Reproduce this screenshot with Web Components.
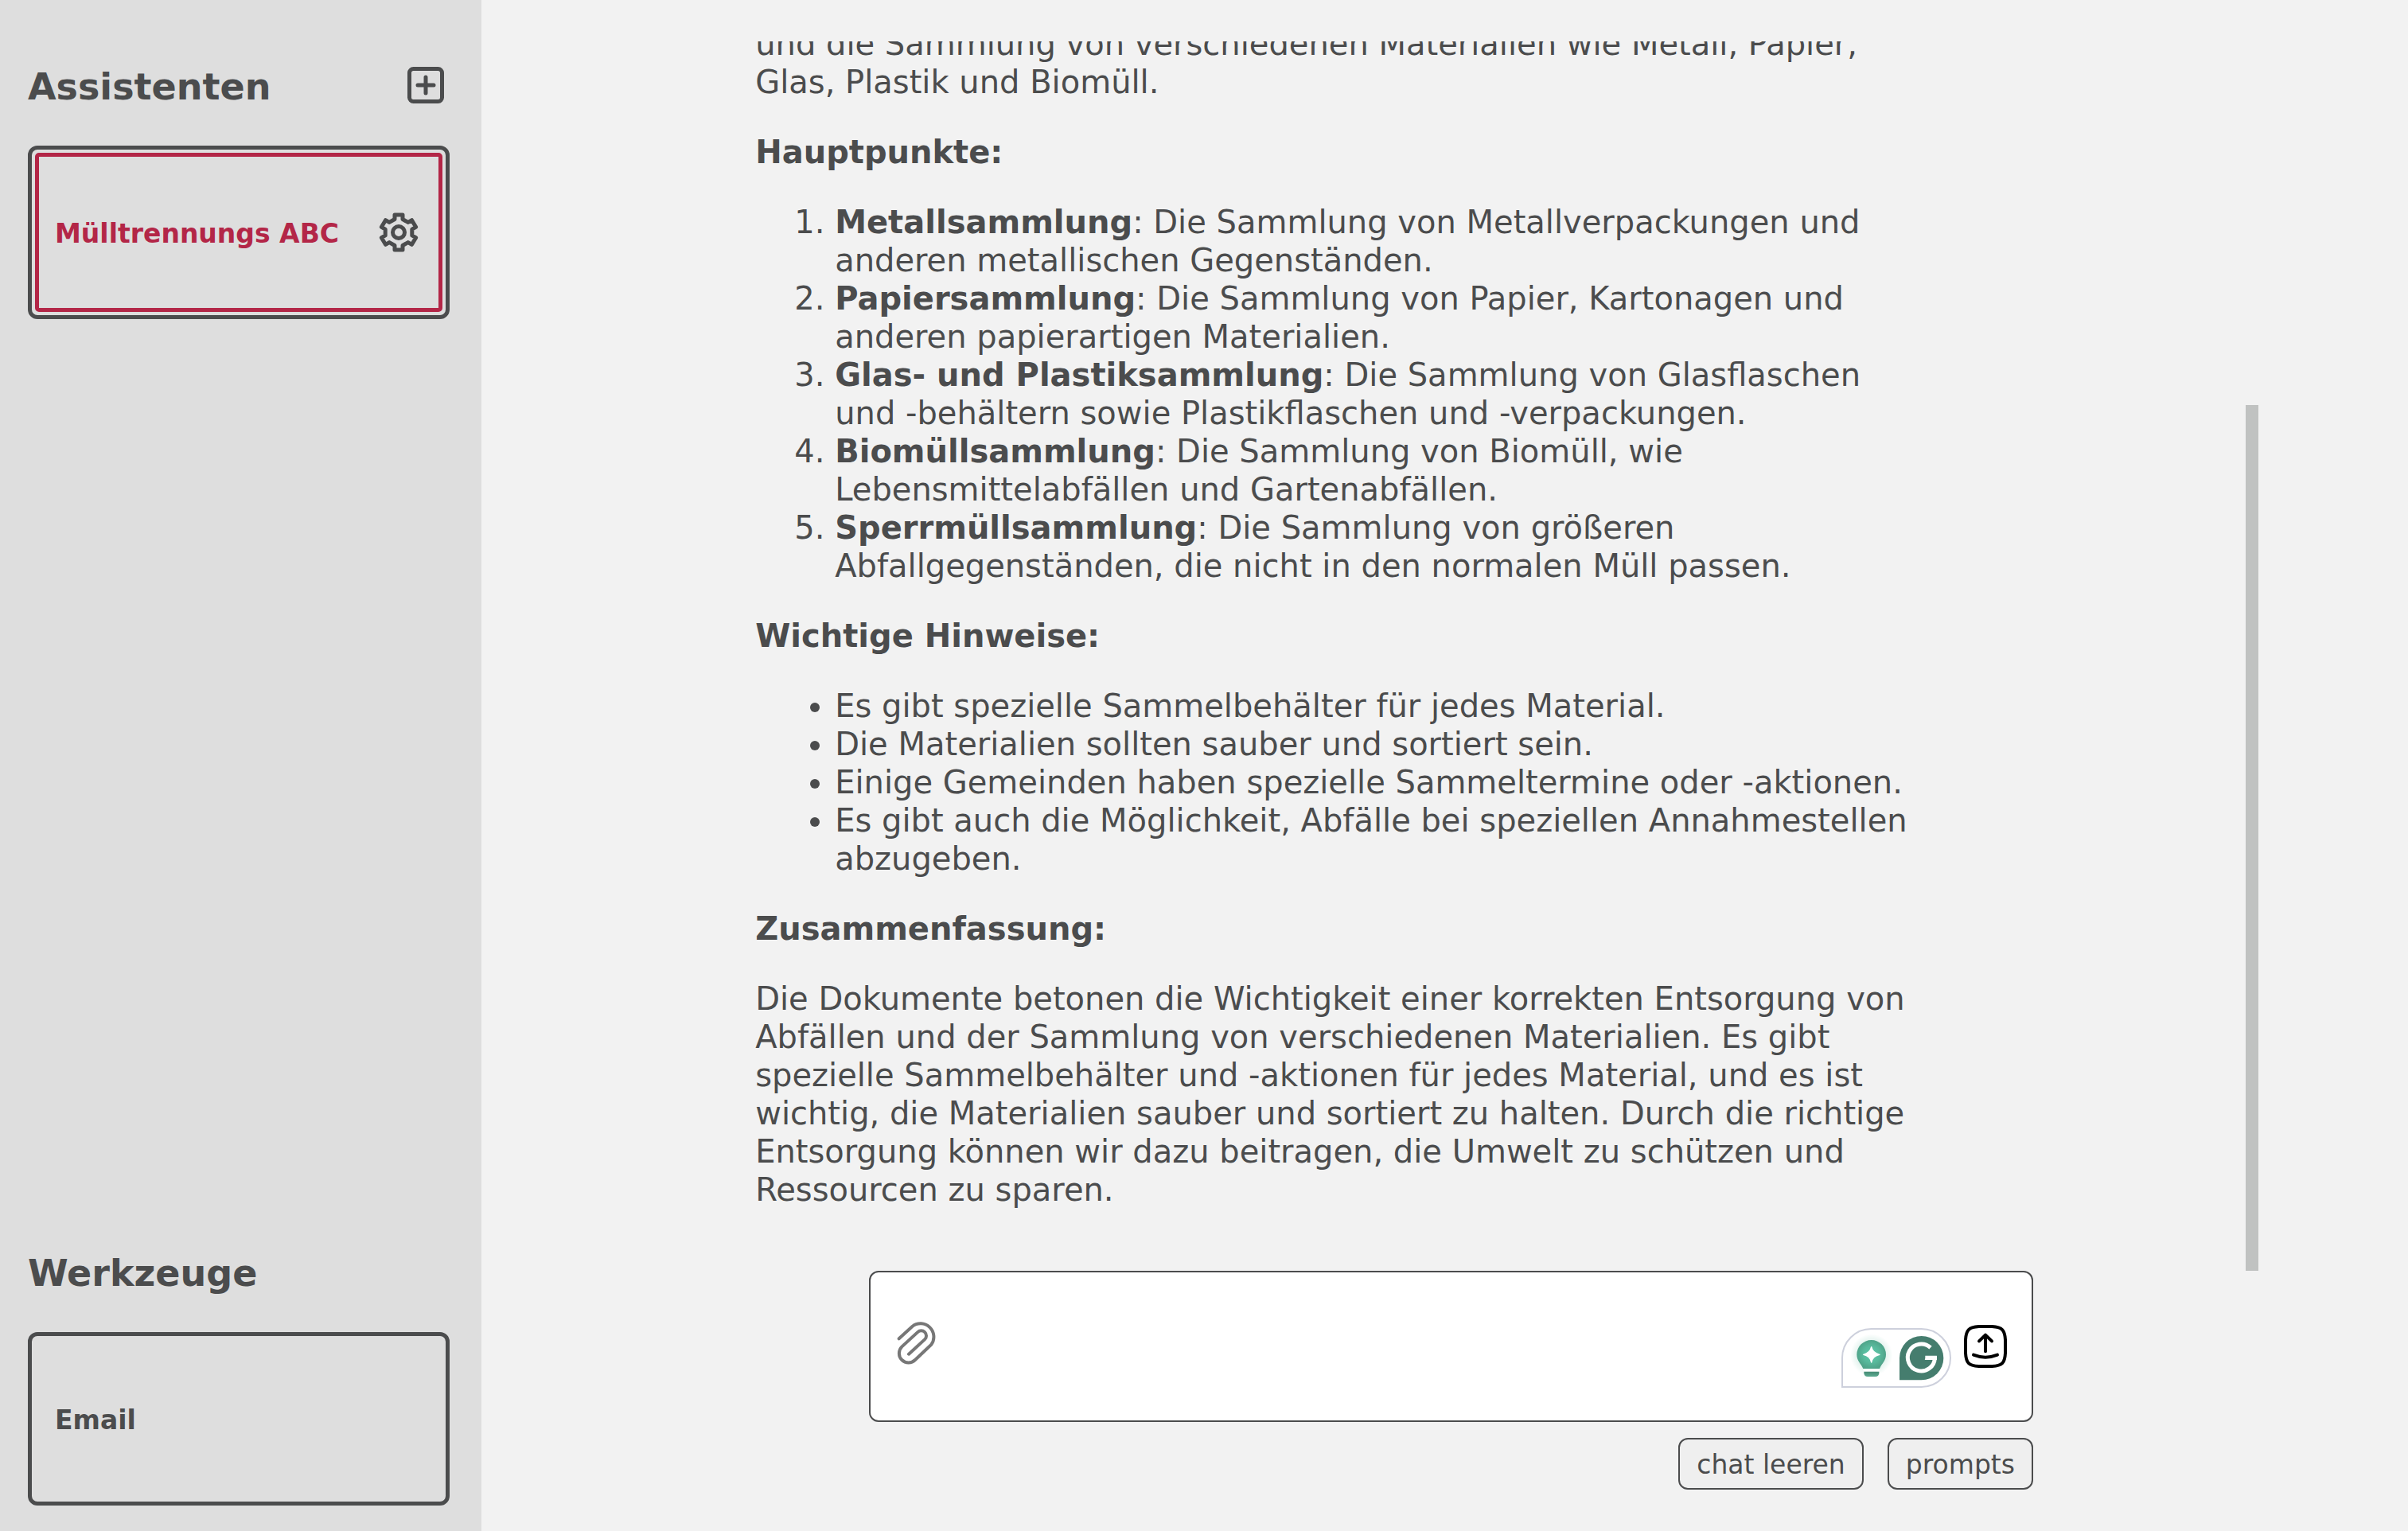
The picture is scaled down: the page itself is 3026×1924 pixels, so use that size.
<!DOCTYPE html>
<html lang="de">
<head>
<meta charset="utf-8">
<title>Mülltrennungs ABC</title>
<style>
  html, body { margin: 0; height: 100%; }
  body {
    --ink: #4b4c4d;
    --accent: #b32647;
    --panel: #dedede;
    --surface: #f2f2f2;
    color: var(--ink);
    font-family: Verdana, "DejaVu Sans", sans-serif;
    font-size: 40px;
    line-height: 48px;
  }
</style>
</head>
<body>
<chat-app>
  <side-bar slot="side">
    <side-section heading="Assistenten" addable>
      <side-card active configurable>Mülltrennungs ABC</side-card>
    </side-section>
    <side-section heading="Werkzeuge">
      <side-card>Email</side-card>
    </side-section>
  </side-bar>
  <chat-log>
    <chat-message>
      <p>und die Sammlung von verschiedenen Materialien wie Metall, Papier, Glas, Plastik und Biomüll.</p>
      <p><strong>Hauptpunkte:</strong></p>
      <ol>
        <li><strong>Metallsammlung</strong>: Die Sammlung von Metallverpackungen und anderen metallischen Gegenständen.</li>
        <li><strong>Papiersammlung</strong>: Die Sammlung von Papier, Kartonagen und anderen papierartigen Materialien.</li>
        <li><strong>Glas- und Plastiksammlung</strong>: Die Sammlung von Glasflaschen und -behältern sowie Plastikflaschen und -verpackungen.</li>
        <li><strong>Biomüllsammlung</strong>: Die Sammlung von Biomüll, wie Lebensmittelabfällen und Gartenabfällen.</li>
        <li><strong>Sperrmüllsammlung</strong>: Die Sammlung von größeren Abfallgegenständen, die nicht in den normalen Müll passen.</li>
      </ol>
      <p><strong>Wichtige Hinweise:</strong></p>
      <ul>
        <li>Es gibt spezielle Sammelbehälter für jedes Material.</li>
        <li>Die Materialien sollten sauber und sortiert sein.</li>
        <li>Einige Gemeinden haben spezielle Sammeltermine oder -aktionen.</li>
        <li>Es gibt auch die Möglichkeit, Abfälle bei speziellen Annahmestellen abzugeben.</li>
      </ul>
      <p><strong>Zusammenfassung:</strong></p>
      <p>Die Dokumente betonen die Wichtigkeit einer korrekten Entsorgung von Abfällen und der Sammlung von verschiedenen Materialien. Es gibt spezielle Sammelbehälter und -aktionen für jedes Material, und es ist wichtig, die Materialien sauber und sortiert zu halten. Durch die richtige Entsorgung können wir dazu beitragen, die Umwelt zu schützen und Ressourcen zu sparen.</p>
    </chat-message>
  </chat-log>
  <chat-composer></chat-composer>
  <chat-actions>
    <chat-button>chat leeren</chat-button>
    <chat-button>prompts</chat-button>
  </chat-actions>
</chat-app>

<script>
class Base extends HTMLElement {
  connectedCallback() {
    if (this.shadowRoot) return;
    this.attachShadow({ mode: 'open' }).innerHTML =
      '<style>*{box-sizing:border-box} button{font:inherit;color:inherit;cursor:pointer} svg{display:block}' +
      this.css() + '</style>' + this.html();
  }
}

customElements.define('chat-app', class extends Base {
  css() { return `
    :host { display: flex; height: 100vh; background: var(--surface); overflow: hidden; }
    aside { flex: 0 0 20%; background: var(--panel); }
    main { flex: 1; min-width: 0; display: flex; flex-direction: column; padding: 52px 188px; box-sizing: border-box; }`; }
  html() { return `<aside><slot name="side"></slot></aside><main><slot></slot></main>`; }
});

customElements.define('side-bar', class extends Base {
  css() { return `:host { display: flex; flex-direction: column; justify-content: space-between; box-sizing: border-box; height: 100%; padding: 82px 40px 32px 35px; }`; }
  html() { return `<slot></slot>`; }
});

customElements.define('side-section', class extends Base {
  css() { return `
    :host { display: flex; flex-direction: column; gap: 47px; }
    header { display: flex; justify-content: space-between; align-items: flex-start; padding-right: 7px; }
    h2 { margin: 0; font-size: 46px; line-height: 54px; font-weight: bold; }
    button { border: 0; background: none; padding: 2px 0 0; }`; }
  html() {
    const add = this.hasAttribute('addable') ? `<button aria-label="Assistent hinzufügen">
      <svg width="46" height="46" viewBox="0 0 46 46" fill="none" stroke="currentColor" stroke-width="5" stroke-linecap="round">
        <rect x="2.5" y="2.5" width="41" height="41" rx="5"/><path d="M23 13v20M13 23h20"/></svg></button>` : '';
    return `<header><h2>${this.getAttribute('heading')}</h2>${add}</header><slot></slot>`;
  }
});

customElements.define('side-card', class extends Base {
  css() { return `
    :host { display: flex; box-sizing: border-box; height: 218px; border: 5px solid var(--ink); border-radius: 12px; padding: 4px; }
    .frame { flex: 1; display: flex; align-items: center; justify-content: space-between; border: 5px solid transparent; border-radius: 5px; padding: 0 25px 0 20px; }
    :host([active]) .frame { border-color: var(--accent); }
    :host([active]) .name { color: var(--accent); }
    button { border: 0; background: none; padding: 0; }
    .name { flex: 1; align-self: stretch; padding-top: 3px; text-align: left; font-size: 33px; font-weight: bold; }`; }
  html() {
    const gear = this.hasAttribute('configurable') ? `<button aria-label="Einstellungen">
      <svg width="50" height="50" viewBox="-25 -25 50 50" fill="none" stroke="currentColor" stroke-width="5" stroke-linejoin="round">
        <path d="M-5-22H5V-16.5L11.8-12.6L16.5-15.3L21.6-6.7L16.8-3.9V3.9L21.6 6.7L16.5 15.3L11.8 12.6L5 16.5V22H-5V16.5L-11.8 12.6L-16.5 15.3L-21.6 6.7L-16.8 3.9V-3.9L-21.6-6.7L-16.5-15.3L-11.8-12.6L-5-16.5Z"/>
        <circle r="7.5"/></svg></button>` : '';
    return `<div class="frame"><button class="name"><slot></slot></button>${gear}</div>`;
  }
});

customElements.define('chat-log', class extends Base {
  css() { return `
    :host { flex: 1; min-height: 0; display: flex; justify-content: space-between; }
    .view { display: flex; flex-direction: column; justify-content: flex-end; overflow: hidden; width: 1632px; padding: 0 4px 38px 156px; }
    .track { display: flex; flex-direction: column; justify-content: flex-end; width: 16px; }
    .thumb { height: 1088px; background: #c0c2c1; }`; }
  html() { return `<div class="view"><slot></slot></div><div class="track"><div class="thumb"></div></div>`; }
});

customElements.define('chat-message', class extends Base {
  css() { return `
    :host { display: block; }
    ::slotted(p), ::slotted(ol), ::slotted(ul) { margin: 40px 0; }
    ::slotted(ol), ::slotted(ul) { padding-left: 100px; }`; }
  html() { return `<slot></slot>`; }
});

customElements.define('chat-composer', class extends Base {
  css() { return `
    :host { position: relative; display: flex; align-items: center; gap: 24px; box-sizing: border-box; height: 190px; margin: 0 283px 0 299px; padding: 0 31px 0 33px; background: #fff; border: 2px solid var(--ink); border-radius: 12px; }
    button { border: 0; background: none; padding: 0; }
    .clip { color: #777; padding-bottom: 10px; }
    .send { color: #000; }
    textarea { flex: 1; min-width: 0; height: 100px; border: 0; outline: 0; resize: none; background: none; font: inherit; color: inherit; }
    .helper { position: absolute; right: 101px; bottom: 41px; width: 138px; height: 75px; background: #fff; border: 2px solid #cdd0dc; border-radius: 38px 38px 38px 0; }`; }
  html() { return `
    <button class="clip" aria-label="Datei anhängen"><svg width="51" height="56" viewBox="0 0 153 168" fill="none" stroke="currentColor" stroke-width="12" stroke-linecap="round">
      <path d="M8 70L58 24A50 50 0 0 1 130 92L69 150A35 35 0 0 1 19 100L78.500 45.500A19 19 0 0 1 105.500 72.500L45 128"/></svg></button>
    <textarea aria-label="Nachricht"></textarea>
    <button class="send" aria-label="Senden"><svg width="54" height="54" viewBox="0 0 162 162" fill="none" stroke="currentColor" stroke-width="12" stroke-linecap="round" stroke-linejoin="round">
      <path d="M56 6H106C144 8 154 20 156 56V106C154 144 144 154 106 156H56C18 154 8 144 6 106V56C8 20 18 8 56 6Z"/>
      <path d="M81 100V39M57 61L81 38L105 61M36 113Q81 131 126 113"/></svg></button>
    <div class="helper"><svg width="134" height="71" viewBox="0 0 402 213">
      <defs>
        <radialGradient id="g"><stop offset="0" stop-color="#5fcbae"/><stop offset=".6" stop-color="#58b89b"/><stop offset="1" stop-color="#4fa389"/></radialGradient>
        <linearGradient id="b" x2="0" y2="1"><stop offset="0" stop-color="#458a74"/><stop offset="1" stop-color="#5cab91"/></linearGradient>
        <radialGradient id="h"><stop offset=".6" stop-color="#58b89b" stop-opacity=".2"/><stop offset="1" stop-color="#58b89b" stop-opacity="0"/></radialGradient>
      </defs>
      <circle cx="107" cy="96" r="80" fill="url(#h)"/>
      <path d="M107 39A55 55 0 0 1 162 94C162 118 146 128 138 147H76C68 128 52 118 52 94A55 55 0 0 1 107 39Z" fill="url(#g)"/>
      <path d="M77 147H137V158H77Z" fill="#fff"/>
      <path d="M79 158H136V163Q136 177 122 177H93Q79 177 79 163Z" fill="url(#b)"/>
      <path d="M107 65Q112 88 138 94Q112 99 107 123Q102 99 77 94Q102 88 107 65Z" fill="#fff" stroke="#fff" stroke-width="4" stroke-linejoin="round"/>
      <path d="M296 24A83 83 0 0 1 296 190H213V107A83 83 0 0 1 296 24Z" fill="#457d6e"/>
      <path d="M330 68A51 51 0 1 0 346 106H310" fill="none" stroke="#fff" stroke-width="15"/>
      <path d="M308 114L315 99H354V114Z" fill="#fff"/>
    </svg></div>`; }
});

customElements.define('chat-actions', class extends Base {
  css() { return `:host { display: flex; justify-content: flex-end; gap: 30px; margin: 20px 283px 0 299px; }`; }
  html() { return `<slot></slot>`; }
});

customElements.define('chat-button', class extends Base {
  css() { return `
    :host { display: block; }
    button { display: block; height: 65px; padding: 3px 21px 0; border: 2px solid var(--ink); border-radius: 12px; background: #efefef; font-size: 33px; }`; }
  html() { return `<button><slot></slot></button>`; }
});
</script>
</body>
</html>
